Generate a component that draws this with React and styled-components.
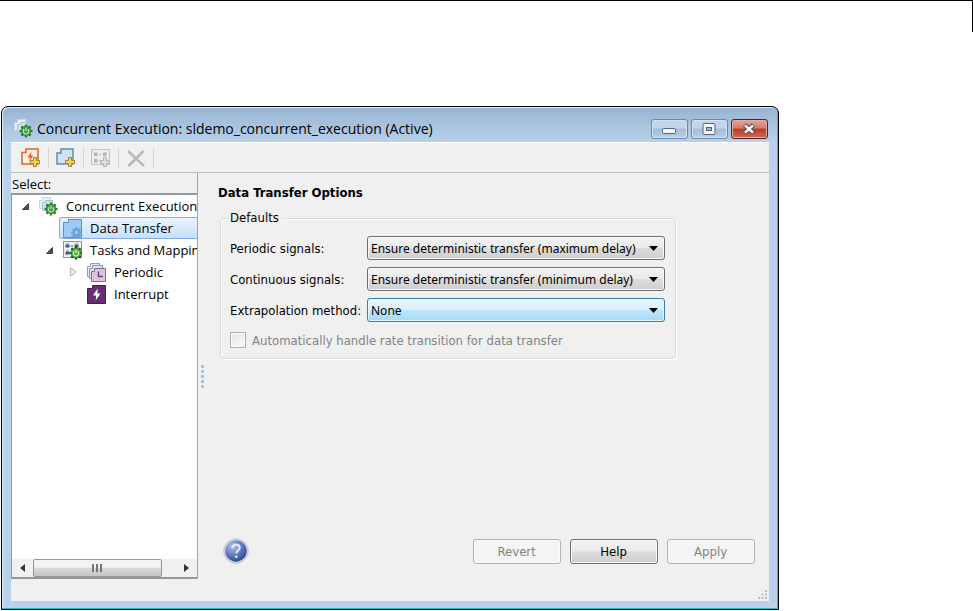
import styled, { createGlobalStyle, css } from "styled-components";
import { useState } from "react";

const GlobalStyle = createGlobalStyle`
  * {
    box-sizing: border-box;
  }
  body {
    margin: 0;
    background: #fff;
    color: #000;
  }
  button, select, input {
    margin: 0;
    font: inherit;
    color: inherit;
  }
`;

const segoe = '"Open Sans", "Noto Sans", sans-serif';
const tahoma = '"DejaVu Sans Condensed", "DejaVu Sans", sans-serif';

const Page = styled.div`
  display: flex;
  flex-direction: column;
  min-height: 100vh;
  padding: 0 0 1px 1px;
`;

const PageRule = styled.div`
  height: 32px;
  margin: 0 0 74px -1px;
  border-top: 1px solid #000;
  border-right: 1px solid #000;
`;

const Window = styled.section`
  flex: 1;
  display: flex;
  flex-direction: column;
  width: 80%;
  min-width: 700px;
  padding: 0 9px 8px;
  border: 1px solid #000;
  border-radius: 7px 7px 0 0;
  background: linear-gradient(#98b4d2 0, #b9d1ea 36px, #b9d1ea);
  box-shadow: inset -1px -1px 0 #35b8d6, inset 1px 1px 0 #dcecf8;
`;

const TitleBar = styled.header`
  display: flex;
  align-items: center;
  height: 35px;
  padding: 8px 1px 0 3px;
  gap: 4px;
`;

const Title = styled.h1`
  flex: 1;
  margin: 0;
  font-family: ${segoe};
  font-size: 14px;
  font-weight: 400;
  line-height: 18px;
  white-space: nowrap;
`;

const Controls = styled.div`
  display: flex;
  gap: 3px;
`;

const ControlButton = styled.button`
  display: grid;
  place-items: center;
  width: 37px;
  height: 20px;
  padding: 0;
  border: 1px solid #6f87a8;
  border-radius: 3px;
  background: linear-gradient(#c3d5e8 45%, #a3bdd8 50%, #b9d0e8);
  box-shadow: inset 0 0 0 1px #d5e3f1;
  ${(p) =>
    p.$close &&
    css`
      border-color: #5a1f2c;
      background: linear-gradient(#e4a59b 0, #d67c6c 45%, #b93c26 50%, #cf6a50);
      box-shadow: inset 0 0 0 1px #e5aca2;
    `}
`;

const Client = styled.main`
  flex: 1;
  display: flex;
  flex-direction: column;
  background: #f0f0f0;
`;

const Toolbar = styled.div`
  display: flex;
  align-items: center;
  height: 31px;
  padding-left: 9px;
  border-top: 1px solid #fff;
  border-bottom: 1px solid #bdbdbd;
`;

const ToolButton = styled.button`
  display: grid;
  place-items: center;
  width: 22px;
  height: 24px;
  padding: 0;
  border: 0;
  background: none;
`;

const Separator = styled.span`
  width: 1px;
  height: 20px;
  margin: 0 6px;
  background: #d4d4d4;
`;

const Split = styled.div`
  flex: 1;
  display: flex;
`;

const Sidebar = styled.aside`
  display: flex;
  flex-direction: column;
  width: 187px;
  border-right: 1px solid #a0a6ac;
  font-family: ${segoe};
  font-size: 13px;
`;

const SidebarLabel = styled.div`
  height: 20px;
  padding-left: 1px;
  line-height: 22px;
`;

const TreeBox = styled.div`
  flex: 1;
  display: flex;
  flex-direction: column;
  overflow: hidden;
  border: 1px solid #9198a0;
  border-top-width: 2px;
  border-bottom-width: 2px;
  border-right: 0;
  background: #fff;
`;

const TreeList = styled.ul`
  flex: 1;
  margin: 0;
  padding: 0;
  list-style: none;
`;

const TreeRow = styled.li`
  display: flex;
  align-items: center;
  height: 22px;
  padding-left: ${(p) => p.$level * 24 + 7}px;
`;

const Expander = styled.span`
  flex: none;
  display: grid;
  place-items: center;
  width: 12px;
  height: 12px;
  margin-right: 4px;
`;

const TreeItem = styled.button`
  flex: 1 0 auto;
  display: flex;
  align-items: center;
  gap: 8px;
  height: 22px;
  padding: 0 0 0 3px;
  border: 1px solid transparent;
  border-right: 0;
  border-radius: 3px 0 0 3px;
  background: none;
  white-space: nowrap;
  ${(p) =>
    p.$selected &&
    css`
      border-color: #84acdd;
      background: linear-gradient(#e9f3ff, #c8e0fc);
    `}
`;

const ScrollBar = styled.div`
  display: flex;
  align-items: center;
  height: 18px;
  background: #f0f0f0;
`;

const ScrollArrow = styled.button`
  display: grid;
  place-items: center;
  width: 21px;
  height: 18px;
  padding: 0;
  border: 0;
  background: none;
`;

const ScrollTrack = styled.div`
  flex: 1;
  height: 18px;
`;

const ScrollThumb = styled.div`
  display: grid;
  place-items: center;
  width: 90%;
  height: 18px;
  border: 1px solid #979797;
  border-radius: 2px;
  background: linear-gradient(#f3f3f3 45%, #d9dadc 50%, #c3c5c9);
`;

const Grip = styled.div`
  display: flex;
  flex-direction: column;
  justify-content: center;
  gap: 2px;
  width: 9px;
  padding-left: 3px;
`;

const GripDot = styled.span`
  width: 3px;
  height: 3px;
  border-radius: 1px;
  background: #9cc0ea;
`;

const Content = styled.div`
  flex: 1;
  display: flex;
  flex-direction: column;
  padding: 11px 14px 15px 11px;
  font-family: ${tahoma};
  font-size: 13px;
`;

const Heading = styled.h2`
  margin: 0;
  font-size: 13px;
  line-height: 18px;
`;

const Group = styled.fieldset`
  width: 456px;
  margin: 7px 0 0 2px;
  padding: 9px 10px 7px 9px;
  border: 1px solid #d5dfe5;
  border-radius: 4px;
  box-shadow: inset 1px 1px 0 #fff, 1px 1px 0 #fff;
`;

const Legend = styled.legend`
  margin-left: -3px;
  padding: 0 3px;
  line-height: 18px;
  background: #f0f0f0;
`;

const Field = styled.div`
  display: flex;
  align-items: center;
  height: 24px;
  margin-bottom: 7px;
`;

const FieldLabel = styled.label`
  width: 137px;
  white-space: nowrap;
`;

const SelectWrap = styled.div`
  position: relative;
  flex: 1;
`;

const Arrow = styled.svg`
  position: absolute;
  top: 10px;
  right: 7px;
  pointer-events: none;
`;

const Select = styled.select`
  appearance: none;
  display: block;
  width: 100%;
  height: 24px;
  padding: 0 20px 0 3px;
  border: 1px solid #707070;
  border-radius: 3px;
  background: linear-gradient(#f2f2f2, #ebebeb 48%, #dcdcdc 52%, #cfcfcf);
  box-shadow: inset 0 0 0 1px #fafafa;
  font-family: "Noto Sans", sans-serif;
  font-size: 12px;
  ${(p) =>
    p.$hot &&
    css`
      border-color: #3c7fb1;
      background: linear-gradient(#eaf6fd, #d9f0fc 48%, #bee6fd 52%, #a7d9f5);
      box-shadow: inset 0 0 0 1px #e2f4fd;
    `}
`;

const CheckLabel = styled.label`
  display: flex;
  align-items: center;
  gap: 6px;
  height: 22px;
  color: #838383;
  white-space: nowrap;
`;

const Checkbox = styled.input`
  appearance: none;
  width: 16px;
  height: 16px;
  border: 1px solid #b1b1b1;
  background: linear-gradient(135deg, #e6e6e6, #fafafa);
  box-shadow: inset 0 0 0 1px #f8f8f8;
`;

const Footer = styled.div`
  display: flex;
  align-items: center;
  gap: 9px;
  margin-top: auto;
`;

const HelpIcon = styled.button`
  display: grid;
  margin: 0 auto 0 5px;
  padding: 0;
  border: 0;
  background: none;
`;

const PushButton = styled.button`
  width: 88px;
  height: 25px;
  padding: 0;
  border: 1px solid #707070;
  border-radius: 3px;
  background: linear-gradient(#f2f2f2, #ebebeb 48%, #dcdcdc 52%, #cfcfcf);
  box-shadow: inset 0 0 0 1px #fafafa;
  &:disabled {
    border-color: #adb2b5;
    background: #f4f4f4;
    color: #838383;
  }
`;

const StatusBar = styled.footer`
  display: flex;
  align-items: flex-end;
  justify-content: flex-end;
  height: 22px;
  padding: 2px;
`;

const GearShape = ({ fill = "#3f9440", edge = "#2c7a33", hole = "#c4e6bd" }) => (
  <g>
    <path
      d="M12 5.500v13M5.500 12h13M7.400 7.400l9.200 9.200M16.600 7.400l-9.200 9.200"
      stroke={edge}
      strokeWidth="2.200"
    />
    <circle cx="12" cy="12" r="5" fill={fill} stroke={edge} strokeWidth=".6" />
    <path d="M10.300 10.200a2.700 2.700 0 1 0 3.400 0" fill="none" stroke={hole} strokeWidth="1.200" />
    <path d="M12 8.500v3.800" stroke={hole} strokeWidth="1.200" />
  </g>
);

const PlusShape = ({ fill = "#f3d45a", stroke = "#a88420" }) => (
  <path
    d="M12.500 9.500h3v3h3v3h-3v3h-3v-3h-3v-3h3z"
    fill={fill}
    stroke={stroke}
    strokeLinejoin="round"
  />
);

const ConcurrentIcon = () => (
  <svg width="19" height="19" viewBox="0 0 19 19">
    <path d="M.5 3.500h3v-3h8v11H.5z" fill="#e6f1f6" stroke="#c3d8e2" />
    <path d="M3.500 5.500h3v-2h7v10h-10z" fill="#cde2ec" stroke="#a5c4d3" />
    <GearShape />
  </svg>
);

const TransferIcon = () => (
  <svg width="19" height="19" viewBox="0 0 19 19">
    <path d="M.5 3.500h5v-3h13v18H.5z" fill="#8ac0f0" stroke="#5c92c8" />
    <path d="M1 4h5V1h12v6L7 18H1z" fill="#9dcbf5" />
    <path
      d="M8 13.500h10.500M13.500 8v10.500M9.800 9.800l7.400 7.400M17.200 9.800l-7.400 7.400"
      stroke="#65a1dc"
      strokeWidth="2"
    />
    <circle cx="13.500" cy="13.500" r="3.800" fill="#65a1dc" />
    <circle cx="13.500" cy="13.500" r="1.800" fill="#9dcbf5" />
  </svg>
);

const MappingIcon = () => (
  <svg width="19" height="19" viewBox="0 0 19 19">
    <rect x=".5" y=".5" width="18" height="16" fill="#eef1f3" stroke="#8d979e" />
    <path d="M2.500 3.500h4v3h-4zM11.500 3.500h4v3h-4zM2.500 10.500h4v3h-4z" fill="#3d5a70" />
    <path d="M3 2.500h3M12 2.500h3M3 9.500h3" stroke="#a9bac6" />
    <path d="M8 5h2" stroke="#35556b" />
    <g transform="translate(1)">
      <GearShape fill="#48b23f" edge="#14501c" hole="#d4f7b4" />
    </g>
  </svg>
);

const PeriodicIcon = () => (
  <svg width="19" height="19" viewBox="0 0 19 19">
    <path d="M.5 3.500h3v-3h9v13H.5z" fill="#e2edf1" stroke="#8aa5b3" />
    <path d="M2.500 5.500h3v-3h10v13h-13z" fill="#dde4ec" stroke="#8f99ae" />
    <path d="M4.500 8.500h3v-3h11v13h-14z" fill="#dcc6dd" stroke="#876a92" />
    <path d="M11.500 8.500v5H16" fill="none" stroke="#6a4674" strokeWidth="1.500" />
  </svg>
);

const InterruptIcon = () => (
  <svg width="19" height="19" viewBox="0 0 19 19">
    <path d="M.5 3.500h5v-3h13v18H.5z" fill="#682e73" stroke="#4a1c55" />
    <path d="M10.500 3.500L6 10.500h3.200L8.700 15.500l4.800-7h-3z" fill="#fff" />
  </svg>
);

const NewTriggerIcon = () => (
  <svg width="20" height="20" viewBox="0 0 20 20">
    <path d="M1 4.500h4V1h12v15H1z" fill="#fbeee6" stroke="#d9652c" strokeWidth="1.500" />
    <path d="M10.500 3.500L6.500 9.500h2.700L7.700 14l4.800-6.500H9.800z" fill="#ee5a1c" />
    <PlusShape />
  </svg>
);

const NewTaskIcon = () => (
  <svg width="20" height="20" viewBox="0 0 20 20">
    <path d="M1 5h4V1h12v15H1z" fill="#cfe4f1" stroke="#5f8dab" strokeWidth="1.500" />
    <PlusShape />
  </svg>
);

const AddMappingIcon = () => (
  <svg width="20" height="20" viewBox="0 0 20 20">
    <rect x=".5" y="1.500" width="18" height="15" fill="#ececec" stroke="#c4c4c4" />
    <path d="M3 4.500h3.500V8H3zM12 4.500h3.500V8H12zM3 11h3.500v3.500H3z" fill="#b5b5b5" />
    <path d="M8 6.500h2.500M8 13h2" stroke="#b5b5b5" />
    <PlusShape fill="#dedede" stroke="#b5b5b5" />
  </svg>
);

const DeleteIcon = () => (
  <svg width="20" height="20" viewBox="0 0 20 20">
    <path d="M2 3l16 15M17.500 3L2.500 18" stroke="#b9b9b9" strokeWidth="2.600" />
  </svg>
);

const QuestionIcon = () => (
  <svg width="26" height="26" viewBox="0 0 26 26">
    <defs>
      <radialGradient id="ball" cx="35%" cy="28%" r="80%">
        <stop offset="0" stopColor="#b4c4e8" />
        <stop offset=".5" stopColor="#6580c2" />
        <stop offset="1" stopColor="#25418f" />
      </radialGradient>
    </defs>
    <circle cx="13" cy="13" r="12.300" fill="#d6d9de" stroke="#b8bbc0" strokeWidth=".8" />
    <circle cx="13" cy="13" r="10.700" fill="url(#ball)" />
    <path
      d="M9.500 10.200c0-2.200 1.500-3.500 3.600-3.500s3.600 1.200 3.600 3.100c0 2.700-3.400 2.800-3.400 5.700"
      fill="none"
      stroke="#e6ebf7"
      strokeWidth="2"
    />
    <circle cx="13.300" cy="18.700" r="1.300" fill="#e6ebf7" />
  </svg>
);

const tree = [
  { name: "Concurrent Execution", level: 0, icon: ConcurrentIcon, state: "open" },
  { name: "Data Transfer", level: 1, icon: TransferIcon },
  { name: "Tasks and Mapping", level: 1, icon: MappingIcon, state: "open" },
  { name: "Periodic", level: 2, icon: PeriodicIcon, state: "closed" },
  { name: "Interrupt", level: 2, icon: InterruptIcon },
];

const tools = [
  { name: "Add trigger", icon: NewTriggerIcon },
  { name: "Add task", icon: NewTaskIcon },
  { name: "Add mapping", icon: AddMappingIcon, disabled: true },
  { name: "Delete", icon: DeleteIcon, disabled: true },
];

const signalOptions = [
  "Ensure data integrity only",
  "Ensure deterministic transfer (maximum delay)",
  "Ensure deterministic transfer (minimum delay)",
];

const fields = [
  { id: "periodic", label: "Periodic signals:", options: signalOptions, value: signalOptions[1] },
  { id: "continuous", label: "Continuous signals:", options: signalOptions, value: signalOptions[2] },
  { id: "extrapolation", label: "Extrapolation method:", options: ["None", "Zero Order Hold", "Linear"], value: "None", hot: true },
];

const TreeExpander = ({ state }) => (
  <Expander>
    {state === "open" && (
      <svg width="7" height="7" viewBox="0 0 8 8">
        <path d="M7.500 .5v7h-7z" fill="#505050" stroke="#2e2e2e" />
      </svg>
    )}
    {state === "closed" && (
      <svg width="7" height="10" viewBox="0 0 7 10">
        <path d="M.8 1l5 4-5 4z" fill="#fff" stroke="#a0a0a0" />
      </svg>
    )}
  </Expander>
);

const App = () => {
  const [selected, setSelected] = useState("Data Transfer");

  return (
    <>
      <GlobalStyle />
      <Page>
        <PageRule />
        <Window>
          <TitleBar>
            <ConcurrentIcon />
            <Title>Concurrent Execution: sldemo_concurrent_execution (Active)</Title>
            <Controls>
              <ControlButton aria-label="Minimize">
                <svg width="14" height="14" viewBox="0 0 14 14">
                  <rect x=".5" y="6.500" width="13" height="5" rx="1" fill="#f5f5f5" stroke="#56647a" />
                </svg>
              </ControlButton>
              <ControlButton aria-label="Maximize">
                <svg width="14" height="12" viewBox="0 0 14 12">
                  <rect x="1" y=".5" width="12" height="11" rx="1" fill="#f5f5f5" stroke="#56647a" />
                  <rect x="4.500" y="4.500" width="5" height="3" fill="#9db8d6" stroke="#56647a" />
                </svg>
              </ControlButton>
              <ControlButton $close aria-label="Close">
                <svg width="14" height="12" viewBox="0 0 14 12">
                  <path d="M2.500 2l9 8M11.500 2l-9 8" stroke="#56525f" strokeWidth="4.600" />
                  <path d="M3 2.400l8 7.200M11 2.400l-8 7.200" stroke="#f8f8f8" strokeWidth="2.600" />
                </svg>
              </ControlButton>
            </Controls>
          </TitleBar>
          <Client>
            <Toolbar>
              {tools.map(({ name, icon: Icon, disabled }) => [
                <ToolButton key={name} aria-label={name} disabled={disabled}>
                  <Icon />
                </ToolButton>,
                <Separator key={`${name}-separator`} />,
              ])}
            </Toolbar>
            <Split>
              <Sidebar>
                <SidebarLabel>Select:</SidebarLabel>
                <TreeBox>
                  <TreeList>
                    {tree.map(({ name, level, icon: Icon, state }) => (
                      <TreeRow key={name} $level={level}>
                        <TreeExpander state={state} />
                        <TreeItem $selected={selected === name} onClick={() => setSelected(name)}>
                          <Icon />
                          {name}
                        </TreeItem>
                      </TreeRow>
                    ))}
                  </TreeList>
                  <ScrollBar>
                    <ScrollArrow aria-label="Scroll left">
                      <svg width="5" height="8" viewBox="0 0 5 8">
                        <path d="M5 0v8L0 4z" fill="#333" />
                      </svg>
                    </ScrollArrow>
                    <ScrollTrack>
                      <ScrollThumb>
                        <svg width="10" height="8" viewBox="0 0 10 8">
                          <path d="M1 0v8M5 0v8M9 0v8" stroke="#777" strokeWidth="2" />
                        </svg>
                      </ScrollThumb>
                    </ScrollTrack>
                    <ScrollArrow aria-label="Scroll right">
                      <svg width="5" height="8" viewBox="0 0 5 8">
                        <path d="M0 0v8l5-4z" fill="#333" />
                      </svg>
                    </ScrollArrow>
                  </ScrollBar>
                </TreeBox>
              </Sidebar>
              <Grip>
                {[0, 1, 2, 3, 4].map((dot) => (
                  <GripDot key={dot} />
                ))}
              </Grip>
              <Content>
                <Heading>Data Transfer Options</Heading>
                <Group>
                  <Legend>Defaults</Legend>
                  {fields.map(({ id, label, options, value, hot }) => (
                    <Field key={id}>
                      <FieldLabel htmlFor={id}>{label}</FieldLabel>
                      <SelectWrap>
                        <Select id={id} defaultValue={value} $hot={hot}>
                          {options.map((option) => (
                            <option key={option}>{option}</option>
                          ))}
                        </Select>
                        <Arrow width="9" height="5" viewBox="0 0 9 5">
                          <path d="M0 0h9L4.500 5z" />
                        </Arrow>
                      </SelectWrap>
                    </Field>
                  ))}
                  <CheckLabel>
                    <Checkbox type="checkbox" disabled />
                    Automatically handle rate transition for data transfer
                  </CheckLabel>
                </Group>
                <Footer>
                  <HelpIcon aria-label="About this page">
                    <QuestionIcon />
                  </HelpIcon>
                  <PushButton disabled>Revert</PushButton>
                  <PushButton>Help</PushButton>
                  <PushButton disabled>Apply</PushButton>
                </Footer>
              </Content>
            </Split>
            <StatusBar>
              <svg width="9" height="9" viewBox="0 0 9 9">
                <path d="M7 0h2v2H7zM3.500 3.500h2v2h-2zM7 3.500h2v2H7zM0 7h2v2H0zM3.500 7h2v2h-2zM7 7h2v2H7z" fill="#bdbdbd" />
              </svg>
            </StatusBar>
          </Client>
        </Window>
      </Page>
    </>
  );
};

export default App;
